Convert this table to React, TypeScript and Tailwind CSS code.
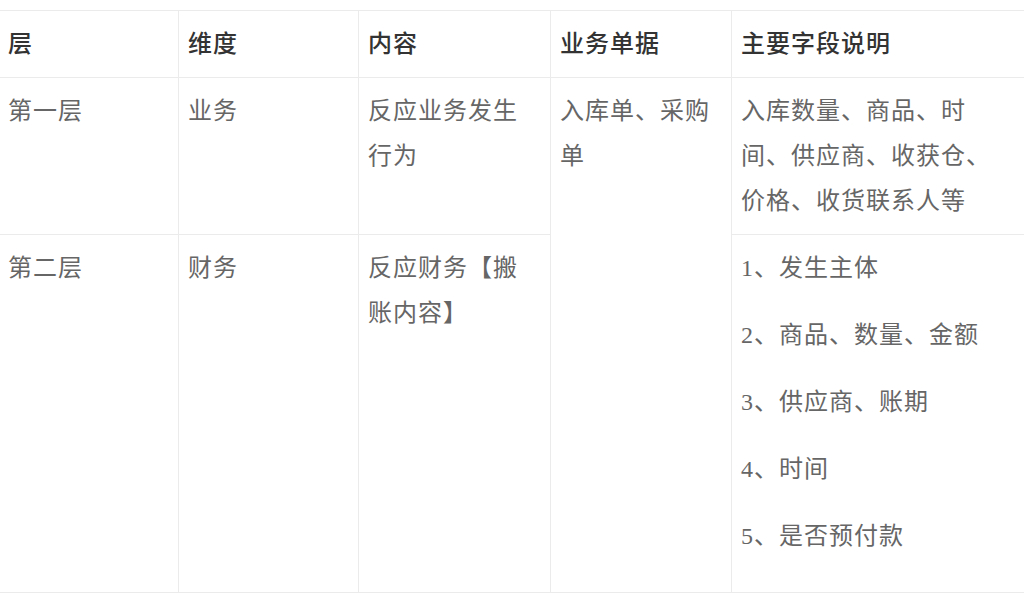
const font = {
  fontFamily: '"Liberation Serif", "Noto Sans CJK SC", serif',
};

const cell =
  "border border-[#ebebeb] align-top pl-[9px] pr-[11px] pt-[11px] pb-[10px] leading-[45px]";

export default function App() {
  return (
    <div className="min-h-screen bg-white pt-[10px]" style={font}>
      <table className="w-[1026px] table-fixed border-collapse text-[24px] tracking-[1px] ml-[-2px] text-[#666]">
        <colgroup>
          <col className="w-[180px]" />
          <col className="w-[180px]" />
          <col className="w-[192px]" />
          <col className="w-[181px]" />
          <col className="w-[293px]" />
        </colgroup>
        <thead>
          <tr className="text-left text-[#333]">
            <th className={`${cell} font-medium`}>层</th>
            <th className={`${cell} font-medium`}>维度</th>
            <th className={`${cell} font-medium`}>内容</th>
            <th className={`${cell} font-medium`}>业务单据</th>
            <th className={`${cell} font-medium`}>主要字段说明</th>
          </tr>
        </thead>
        <tbody>
          <tr>
            <td className={cell}>第一层</td>
            <td className={cell}>业务</td>
            <td className={cell}>反应业务发生行为</td>
            <td className={cell} rowSpan={2}>
              入库单、采购单
            </td>
            <td className={cell}>入库数量、商品、时间、供应商、收获仓、价格、收货联系人等</td>
          </tr>
          <tr>
            <td className={cell}>第二层</td>
            <td className={cell}>财务</td>
            <td className={cell}>反应财务【搬账内容】</td>
            <td className={`${cell} pb-[11px]`}>
              {["1、发生主体", "2、商品、数量、金额", "3、供应商、账期", "4、时间", "5、是否预付款"].map(
                (t) => (
                  <p key={t} className="mb-[22px]">
                    {t}
                  </p>
                )
              )}
            </td>
          </tr>
        </tbody>
      </table>
    </div>
  );
}
